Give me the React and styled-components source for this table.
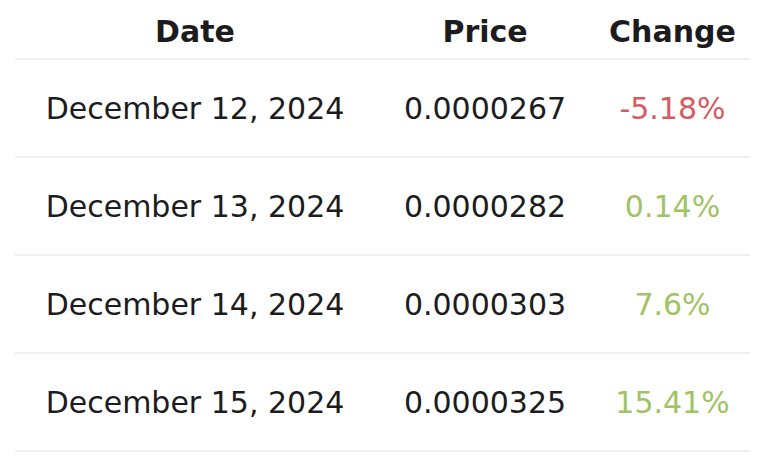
import React from 'react';
import styled, { createGlobalStyle } from 'styled-components';

const GlobalStyle = createGlobalStyle`
  body {
    margin: 0;
    background: #ffffff;
    font-family: "DejaVu Sans", "Noto Sans", sans-serif;
    color: #1c1c1e;
  }
`;

const Wrapper = styled.div`
  padding: 0 20px 0 15px;
  width: 770px;
  box-sizing: border-box;
`;

const Table = styled.table`
  width: 735px;
  border-collapse: collapse;
  table-layout: fixed;
`;

const HeadCell = styled.th`
  height: 54px;
  padding: 4px 0 0;
  font-size: 30px;
  font-weight: 700;
  text-align: center;
  border-bottom: 2px solid #efefef;
  width: ${(props) => props.$width}px;
`;

const Cell = styled.td`
  height: 96px;
  padding: 0;
  font-size: 30px;
  font-weight: 400;
  text-align: center;
  border-bottom: 2px solid #efefef;
  color: ${(props) => props.$color || '#1c1c1e'};
`;

const rows = [
  { date: 'December 12, 2024', price: '0.0000267', change: '-5.18%' },
  { date: 'December 13, 2024', price: '0.0000282', change: '0.14%' },
  { date: 'December 14, 2024', price: '0.0000303', change: '7.6%' },
  { date: 'December 15, 2024', price: '0.0000325', change: '15.41%' },
];

function App() {
  return (
    <Wrapper>
      <GlobalStyle />
      <Table>
        <thead>
          <tr>
            <HeadCell $width={360}>Date</HeadCell>
            <HeadCell $width={220}>Price</HeadCell>
            <HeadCell $width={155}>Change</HeadCell>
          </tr>
        </thead>
        <tbody>
          {rows.map((row) => (
            <tr key={row.date}>
              <Cell>{row.date}</Cell>
              <Cell>{row.price}</Cell>
              <Cell $color={row.change.startsWith('-') ? '#d85a63' : '#9fc463'}>
                {row.change}
              </Cell>
            </tr>
          ))}
        </tbody>
      </Table>
    </Wrapper>
  );
}

export default App;
